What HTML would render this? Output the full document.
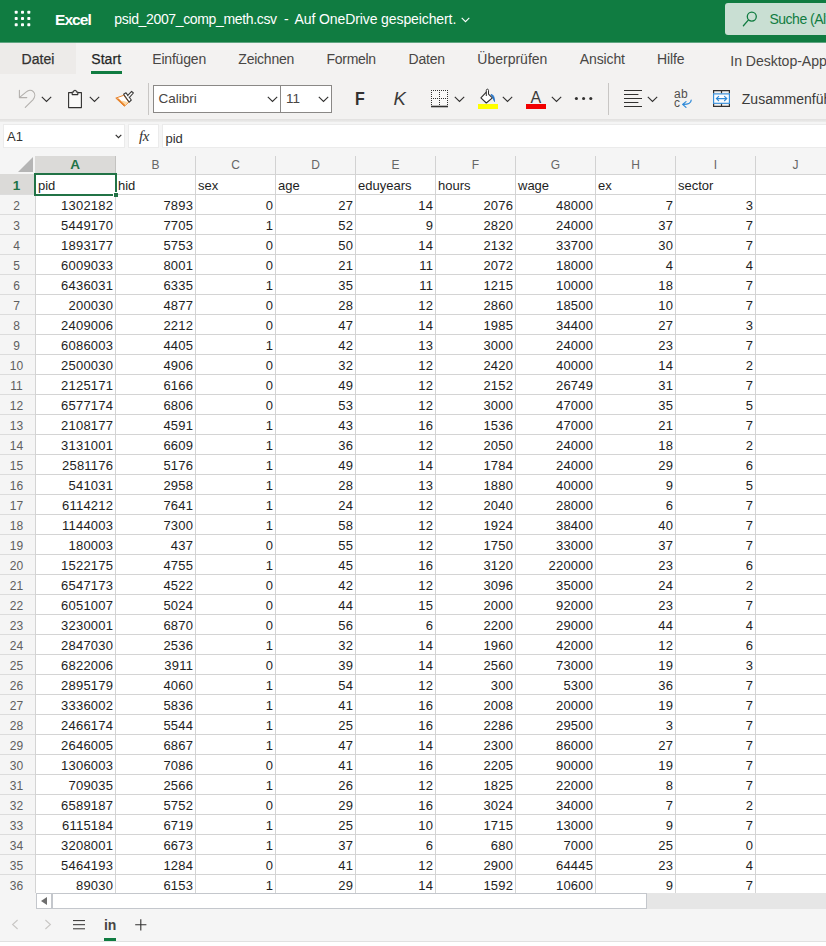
<!DOCTYPE html>
<html lang="de">
<head>
<meta charset="utf-8">
<title>psid_2007_comp_meth.csv - Excel</title>
<style>
*{box-sizing:border-box;margin:0;padding:0}
html,body{width:826px;height:946px;overflow:hidden;background:#f3f2f1;font-family:"Liberation Sans",sans-serif;}
body{position:relative}
.abs{position:absolute}
/* ---------- top green bar ---------- */
#top{position:absolute;left:0;top:0;width:826px;height:43px;background:#107c41;color:#fff;border-bottom:1px solid #5fa581;z-index:2}
#top .brand{position:absolute;left:55px;top:10px;font-size:15.5px;font-weight:bold;letter-spacing:-0.95px;line-height:20px}
#top .fname{position:absolute;left:114px;top:9.3px;font-size:14px;line-height:20px;white-space:nowrap}
#search{position:absolute;left:725px;top:3px;width:120px;height:32px;background:#c9dfd3;border-radius:3px;color:#107c41;font-size:14px;line-height:33px;padding-left:44.5px;white-space:nowrap;letter-spacing:-0.5px}
/* ---------- tabs ---------- */
#tabs{position:absolute;left:0;top:42px;width:826px;height:32px;background:#f3f2f1;color:#444;font-size:14px}
#tabs .sb{-webkit-text-stroke:0.25px #323130;color:#323130;letter-spacing:0.05px}
#tabs .file{position:absolute;left:0;top:0;width:76px;height:32px;background:#edebe9}
#tabs span{position:absolute;top:8px;line-height:18px;white-space:nowrap;color:#484644}
#tabs .ul{position:absolute;left:91px;top:29px;width:31px;height:3px;background:#107c41}
/* ---------- ribbon ---------- */
#ribbon{position:absolute;left:0;top:74px;width:826px;height:44px;background:#f3f2f1}
#ribbon .sep{position:absolute;top:7px;width:1px;height:32px;background:#c8c6c4}
#fontbox{position:absolute;left:153px;top:11px;width:128px;height:28px;background:#fff;border:1px solid #8a8886;font-size:13.5px;line-height:26px;padding-left:4.5px;color:#484644}
#sizebox{position:absolute;left:280px;top:11px;width:52px;height:28px;background:#fff;border:1px solid #8a8886;font-size:13.5px;line-height:26px;padding-left:5px;color:#484644}
#ribbon .txt{position:absolute;color:#323130;white-space:nowrap}
#ribbon .chev{}
#shadow{position:absolute;left:0;top:119px;width:826px;height:5px;background:linear-gradient(#e2e1e0 0,#e5e4e3 25%,#ececeb 55%,#f5f5f5 100%)}
/* ---------- formula bar ---------- */
#fbar{position:absolute;left:0;top:122px;width:826px;height:34px;background:#f5f5f5}
#namebox{position:absolute;left:3px;top:2px;width:122px;height:24px;background:#fff;border:1px solid #ebebeb;font-size:13px;line-height:24px;padding-left:3px;color:#323130}
#fx{position:absolute;left:128px;top:2px;width:31px;height:24px;background:#fff;border:1px solid #ebebeb;font-family:'Liberation Serif',serif;font-style:italic;font-size:15px;line-height:22px;padding-left:10px;color:#323130;letter-spacing:-0.5px}
#finput{position:absolute;left:162px;top:2px;width:670px;height:24px;background:#fff;border:1px solid #ebebeb;font-size:13px;line-height:27px;padding-left:2.5px;color:#323130}
/* ---------- grid ---------- */
#grid{position:absolute;left:0;top:156px;width:826px;height:737px;background:#fff}
#gridlines{position:absolute;left:35px;top:174px;width:791px;height:719px;
 background-image:linear-gradient(to right,#d4d4d4 1px,transparent 1px),linear-gradient(to bottom,transparent 19px,#d4d4d4 19px);
 background-size:80px 20px,20px 20px;background-position:0 0,0 1px}
#colhead{position:absolute;left:0;top:156px;width:826px;height:19px;background:#f5f5f5;border-bottom:1px solid #c6c6c6}
#tri{position:absolute;left:18px;top:157px;width:0;height:0;border-left:15px solid transparent;border-bottom:15px solid #b5b5b5}
#rowhead{position:absolute;left:0;top:175px;width:35px;height:734px;background:#f5f5f5}
.ch{position:absolute;top:156px;width:80px;height:18px;line-height:18px;text-align:center;font-size:12px;color:#666;border-right:1px solid #d2d2d2}
.ch.sel{background:#dbdad8;color:#217346;font-weight:bold;font-size:13.5px;border-right:1px solid #c3c2c0;width:81px;margin-left:-1px;height:17px;line-height:17px}
.rh{position:absolute;left:0;width:35px;height:20px;line-height:24px;text-align:center;font-size:12px;color:#5f5f5f;padding-right:2px;border-bottom:1px solid #dcdcdc;height:21px}
.rh.sel{background:#dbdad8;color:#217346;font-weight:bold;font-size:13.5px;line-height:23px}
.c{position:absolute;width:80px;height:20px;line-height:23px;font-size:13px;text-align:right;padding:0 1.9px 0 3px;color:#1e1e1e;white-space:nowrap;letter-spacing:0.2px}
.c.l{text-align:left;letter-spacing:0}
#selbox{position:absolute;left:34px;top:173px;width:83px;height:23px;border:2px solid #217346}
#handle{position:absolute;left:113px;top:192px;width:5px;height:5px;background:#217346;border-left:1px solid #fff;border-top:1px solid #fff}
/* ---------- bottom ---------- */
#hscroll{position:absolute;left:35px;top:893px;width:791px;height:16px;background:#e6e6e6}
#hscroll:before{content:'';position:absolute;left:0;top:0;width:1px;height:16px;background:#f5f5f5}
#hscroll .btn{position:absolute;left:1px;top:0;width:16px;height:16px;background:#fff;border:1px solid #c4c7cc}
#hscroll .btn:after{content:'';position:absolute;left:4px;top:3px;border-right:6px solid #6e6e6e;border-top:4px solid transparent;border-bottom:4px solid transparent}
#hscroll .thumb{position:absolute;left:17px;top:0;width:595px;height:16px;background:#fff;border:1px solid #c4c7cc}
#sheetbar{position:absolute;left:0;top:909px;width:826px;height:32px;background:#f5f5f5}
#status{position:absolute;left:0;top:941px;width:826px;height:5px;background:#fff;border-top:1px solid #e1e1e1}
</style>
</head>
<body>
<div id="top">
  <svg class="abs" style="left:14px;top:10px" width="17" height="17" viewBox="0 0 17 17" fill="#fff">
    <rect x="0.7" y="0.8" width="3" height="3" rx="0.8"/><rect x="7" y="0.8" width="3" height="3" rx="0.8"/><rect x="13.3" y="0.8" width="3" height="3" rx="0.8"/>
    <rect x="0.7" y="7" width="3" height="3" rx="0.8"/><rect x="7" y="7" width="3" height="3" rx="0.8"/><rect x="13.3" y="7" width="3" height="3" rx="0.8"/>
    <rect x="0.7" y="13.2" width="3" height="3" rx="0.8"/><rect x="7" y="13.2" width="3" height="3" rx="0.8"/><rect x="13.3" y="13.2" width="3" height="3" rx="0.8"/>
  </svg>
  <div class="brand">Excel</div>
  <div class="fname" id="fn1" style="left:114.3px;letter-spacing:-0.35px">psid_2007_comp_meth.csv</div>
  <div class="fname" id="fn2" style="left:284px">-</div>
  <div class="fname" id="fn3" style="left:294.5px;letter-spacing:-0.1px">Auf OneDrive gespeichert.</div>
  <svg class="abs" style="left:461px;top:17px" width="9" height="6" viewBox="0 0 9 6" fill="none" stroke="#fff" stroke-width="1.1"><path d="M0.7 0.8 L4.5 4.6 L8.3 0.8"/></svg>
  <div id="search">Suche (Alt + M)</div>
  <svg class="abs" style="left:742px;top:10px" width="17" height="17" viewBox="0 0 17 17" fill="none" stroke="#107c41" stroke-width="1.3" stroke-linecap="round"><circle cx="9.8" cy="6.6" r="4.5"/><path d="M6.5 9.9 L1.4 15.8"/></svg>
</div>

<div id="tabs">
  <div class="file"></div>
  <span class="sb" style="left:21.5px">Datei</span>
  <span class="sb" style="left:91.3px;color:#201f1e">Start</span>
  <div class="ul"></div>
  <span style="left:152.3px;letter-spacing:-0.2px">Einfügen</span>
  <span style="left:238.3px;letter-spacing:-0.22px">Zeichnen</span>
  <span style="left:326.6px;letter-spacing:-0.3px">Formeln</span>
  <span style="left:408.6px;letter-spacing:-0.2px">Daten</span>
  <span style="left:477.3px">Überprüfen</span>
  <span style="left:579.8px;letter-spacing:-0.12px">Ansicht</span>
  <span style="left:657px;letter-spacing:-0.1px">Hilfe</span>
  <span style="left:730.3px;top:9.6px;font-size:14.1px;letter-spacing:-0.05px">In Desktop-App öffnen</span>
</div>

<div id="ribbon">
    <!-- undo (disabled) -->
  <svg class="abs" style="left:18px;top:15px" width="18" height="20" viewBox="0 0 18 20" fill="none" stroke="#b3b0ad" stroke-width="1.1" stroke-linecap="round" stroke-linejoin="round">
    <path d="M1.4 1.2 V8.6 H8.8"/><path d="M1.6 8.4 L8.3 2.8 C10.4 1 13.4 0.8 15.3 2.6 C17.4 4.8 17.2 8.2 14.9 10.8 L7.3 18.4"/>
  </svg>
  <svg class="abs chev" style="left:41px;top:22px" width="11" height="7" viewBox="0 0 11 7" fill="none" stroke="#323130" stroke-width="1.1"><path d="M0.8 0.8 L5.5 5.5 L10.2 0.8"/></svg>
  <!-- paste -->
  <svg class="abs" style="left:67px;top:15px" width="16" height="20" viewBox="0 0 16 20" fill="none" stroke="#323130" stroke-width="1.1" stroke-linejoin="round">
    <path d="M5 3.6 H1.6 V18.6 H14.4 V3.6 H11" fill="#faf9f8"/><path d="M5.2 5.6 V3 H6.6 C6.6 0.6 9.4 0.6 9.4 3 H10.8 V5.6 Z" fill="#f3f2f1"/>
  </svg>
  <svg class="abs chev" style="left:89px;top:22px" width="11" height="7" viewBox="0 0 11 7" fill="none" stroke="#323130" stroke-width="1.1"><path d="M0.8 0.8 L5.5 5.5 L10.2 0.8"/></svg>
  <!-- format painter -->
  <svg class="abs" style="left:115px;top:16px" width="20" height="18" viewBox="0 0 20 18" fill="none" stroke-linejoin="round">
    <path d="M0.8 8.1 L8.7 5.3 L13.8 12.2 L9.3 16.2 Z" fill="#fff" stroke="#e8832a" stroke-width="1"/>
    <path d="M6.4 10.6 L13.4 12.3 L9.4 15.8 Z" fill="#fbd7a3"/>
    <path d="M0.8 8.1 L9.3 16.2 L10.4 15.2 L3.6 8.4 Z" fill="#e8832a"/>
    <path d="M8.6 4.2 L11 2.8 L16.3 10 L14.2 12.1 Z" fill="#fff" stroke="#3b3a39" stroke-width="1.1"/>
    <path d="M12.4 5.8 L16.6 1.4 L18.4 3 L14.2 7.6" fill="#fff" stroke="#3b3a39" stroke-width="1.1"/>
  </svg>
  <div class="sep" style="left:148px;top:9px"></div>
  <div id="fontbox">Calibri</div>
  <svg class="abs chev" style="left:267px;top:22px" width="11" height="7" viewBox="0 0 11 7" fill="none" stroke="#323130" stroke-width="1.1"><path d="M0.8 0.8 L5.5 5.5 L10.2 0.8"/></svg>
  <div id="sizebox">11</div>
  <svg class="abs chev" style="left:318px;top:22px" width="11" height="7" viewBox="0 0 11 7" fill="none" stroke="#323130" stroke-width="1.1"><path d="M0.8 0.8 L5.5 5.5 L10.2 0.8"/></svg>
  <div class="txt" style="left:355px;top:13px;font-size:18.5px;font-weight:bold;line-height:24px;transform:scaleX(0.86);transform-origin:0 0">F</div>
  <div class="txt" style="left:393.5px;top:13px;font-size:18.5px;font-style:italic;line-height:24px;color:#3b3a39">K</div>
  <!-- borders -->
  <svg class="abs" style="left:430px;top:15px" width="20" height="19" viewBox="0 0 20 19" fill="none" stroke="#323130" shape-rendering="crispEdges">
    <rect x="1" y="1" width="17" height="16" fill="#faf9f8" stroke="none"/>
    <path d="M1 1.5 H18 M1 9.5 H18" stroke-width="1" stroke-dasharray="1 1"/>
    <path d="M1.5 1 V17 M9.5 1 V17 M17.5 1 V17" stroke-width="1" stroke-dasharray="1 1"/>
    <path d="M1 17.5 H18" stroke-width="1.6" shape-rendering="auto"/>
  </svg>
  <svg class="abs chev" style="left:454px;top:22px" width="11" height="7" viewBox="0 0 11 7" fill="none" stroke="#323130" stroke-width="1.1"><path d="M0.8 0.8 L5.5 5.5 L10.2 0.8"/></svg>
  <!-- fill colour -->
  <svg class="abs" style="left:478px;top:14px" width="21" height="22" viewBox="0 0 21 22" fill="none">
    <path d="M8.3 4.1 L14.4 9.9 L8.3 15 L2.9 9.9 Z" fill="#fff" stroke="#323130" stroke-width="1.1" stroke-linejoin="round"/>
    <path d="M8.3 8 V2.4 C8.3 0.7 10.5 0.7 10.5 2.4 V6" fill="#fff" stroke="#323130" stroke-width="1"/>
    <path d="M13 6.4 C15.6 6.6 16.6 9.6 16.5 13.6 C15.4 11.4 15 9.4 13 6.4 Z" fill="#1f6fc5" stroke="#1f6fc5" stroke-width="0.8"/>
    <rect x="0" y="16" width="20" height="5" fill="#ffff00"/>
  </svg>
  <svg class="abs chev" style="left:502px;top:22px" width="11" height="7" viewBox="0 0 11 7" fill="none" stroke="#323130" stroke-width="1.1"><path d="M0.8 0.8 L5.5 5.5 L10.2 0.8"/></svg>
  <!-- font colour -->
  <div class="txt" style="left:530.5px;top:13.5px;font-size:16px;line-height:20px;color:#3b3a39">A</div>
  <div class="abs" style="left:526px;top:30px;width:20px;height:5px;background:#f20000"></div>
  <svg class="abs chev" style="left:550.5px;top:22px" width="11" height="7" viewBox="0 0 11 7" fill="none" stroke="#323130" stroke-width="1.1"><path d="M0.8 0.8 L5.5 5.5 L10.2 0.8"/></svg>
  <svg class="abs" style="left:574px;top:22px" width="20" height="5" viewBox="0 0 20 5" fill="#323130"><circle cx="2.4" cy="2.5" r="1.55"/><circle cx="9.6" cy="2.5" r="1.55"/><circle cx="16.8" cy="2.5" r="1.55"/></svg>
  <div class="sep" style="left:608px;top:9px"></div>
  <!-- align -->
  <svg class="abs" style="left:623px;top:15px" width="20" height="19" viewBox="0 0 20 19" fill="none" stroke="#323130" stroke-width="1.1"><path d="M1 1.5 H19 M1 5.5 H15.4 M1 9.5 H19 M1 13.5 H15.4 M1 17.5 H19"/></svg>
  <svg class="abs chev" style="left:647px;top:22px" width="11" height="7" viewBox="0 0 11 7" fill="none" stroke="#323130" stroke-width="1.1"><path d="M0.8 0.8 L5.5 5.5 L10.2 0.8"/></svg>
  <!-- wrap text -->
  <div class="txt" style="left:674px;top:14.3px;font-size:12px;line-height:12px;letter-spacing:0.3px;color:#504e4c">ab</div>
  <div class="txt" style="left:674px;top:22.8px;font-size:12px;line-height:12px;color:#504e4c">c</div>
  <svg class="abs" style="left:681px;top:24px" width="12" height="11" viewBox="0 0 12 11" fill="none" stroke="#2b88d8" stroke-width="1.2" stroke-linecap="round" stroke-linejoin="round"><path d="M10.2 2 C10.2 5.4 7 6.6 1.8 6.4 M5 3.6 L1.6 6.4 L5 9.4"/></svg>
  <!-- merge -->
  <svg class="abs" style="left:712px;top:15px" width="19" height="19" viewBox="0 0 19 19" fill="none">
    <path d="M1 1.6 H18 M1 17.4 H18 M9.5 1.6 V4.6 M9.5 14.4 V17.4 M1.6 1.2 V4.6 M17.4 1.2 V4.6 M1.6 14.4 V17.8 M17.4 14.4 V17.8" stroke="#323130" stroke-width="1.2"/>
    <rect x="1.6" y="4.9" width="15.8" height="9.4" fill="#fafcfe" stroke="#2b88d8" stroke-width="1.1"/>
    <path d="M4.6 9.6 H14.6 M7 7.2 L4.4 9.6 L7 12 M12.2 7.2 L14.8 9.6 L12.2 12" stroke="#2b88d8" stroke-width="1.1"/>
  </svg>
  <div class="txt" style="left:741.8px;top:15px;font-size:14px;line-height:20px;color:#3b3a39">Zusammenführen</div>

</div>
<div id="shadow"></div>

<div id="fbar">
  <div id="namebox">A1</div>
  <div id="fx">fx</div>
  <svg class="abs" style="left:115px;top:12px" width="7" height="5" viewBox="0 0 7 5" fill="none" stroke="#323130" stroke-width="1.2"><path d="M0.7 0.8 L3.5 3.6 L6.3 0.8"/></svg>
  <div id="finput">pid</div>
</div>

<div id="grid"></div>
<div id="colhead"></div>
<div id="tri"></div>
<div id="rowhead"></div>
<div id="gridlines"></div>
<div class="ch sel" style="left:36px">A</div>
<div class="ch" style="left:116px">B</div>
<div class="ch" style="left:196px">C</div>
<div class="ch" style="left:276px">D</div>
<div class="ch" style="left:356px">E</div>
<div class="ch" style="left:436px">F</div>
<div class="ch" style="left:516px">G</div>
<div class="ch" style="left:596px">H</div>
<div class="ch" style="left:676px">I</div>
<div class="ch" style="left:756px">J</div>
<div class="rh sel" style="top:174px">1</div>
<div class="rh" style="top:194px">2</div>
<div class="rh" style="top:214px">3</div>
<div class="rh" style="top:234px">4</div>
<div class="rh" style="top:254px">5</div>
<div class="rh" style="top:274px">6</div>
<div class="rh" style="top:294px">7</div>
<div class="rh" style="top:314px">8</div>
<div class="rh" style="top:334px">9</div>
<div class="rh" style="top:354px">10</div>
<div class="rh" style="top:374px">11</div>
<div class="rh" style="top:394px">12</div>
<div class="rh" style="top:414px">13</div>
<div class="rh" style="top:434px">14</div>
<div class="rh" style="top:454px">15</div>
<div class="rh" style="top:474px">16</div>
<div class="rh" style="top:494px">17</div>
<div class="rh" style="top:514px">18</div>
<div class="rh" style="top:534px">19</div>
<div class="rh" style="top:554px">20</div>
<div class="rh" style="top:574px">21</div>
<div class="rh" style="top:594px">22</div>
<div class="rh" style="top:614px">23</div>
<div class="rh" style="top:634px">24</div>
<div class="rh" style="top:654px">25</div>
<div class="rh" style="top:674px">26</div>
<div class="rh" style="top:694px">27</div>
<div class="rh" style="top:714px">28</div>
<div class="rh" style="top:734px">29</div>
<div class="rh" style="top:754px">30</div>
<div class="rh" style="top:774px">31</div>
<div class="rh" style="top:794px">32</div>
<div class="rh" style="top:814px">33</div>
<div class="rh" style="top:834px">34</div>
<div class="rh" style="top:854px">35</div>
<div class="rh" style="top:874px;border-bottom-color:transparent">36</div>
<div class="c l" style="left:35px;top:174px">pid</div>
<div class="c l" style="left:115px;top:174px">hid</div>
<div class="c l" style="left:195px;top:174px">sex</div>
<div class="c l" style="left:275px;top:174px">age</div>
<div class="c l" style="left:355px;top:174px">eduyears</div>
<div class="c l" style="left:435px;top:174px">hours</div>
<div class="c l" style="left:515px;top:174px">wage</div>
<div class="c l" style="left:595px;top:174px">ex</div>
<div class="c l" style="left:675px;top:174px">sector</div>
<div class="c" style="left:35px;top:194px">1302182</div>
<div class="c" style="left:115px;top:194px">7893</div>
<div class="c" style="left:195px;top:194px">0</div>
<div class="c" style="left:275px;top:194px">27</div>
<div class="c" style="left:355px;top:194px">14</div>
<div class="c" style="left:435px;top:194px">2076</div>
<div class="c" style="left:515px;top:194px">48000</div>
<div class="c" style="left:595px;top:194px">7</div>
<div class="c" style="left:675px;top:194px">3</div>
<div class="c" style="left:35px;top:214px">5449170</div>
<div class="c" style="left:115px;top:214px">7705</div>
<div class="c" style="left:195px;top:214px">1</div>
<div class="c" style="left:275px;top:214px">52</div>
<div class="c" style="left:355px;top:214px">9</div>
<div class="c" style="left:435px;top:214px">2820</div>
<div class="c" style="left:515px;top:214px">24000</div>
<div class="c" style="left:595px;top:214px">37</div>
<div class="c" style="left:675px;top:214px">7</div>
<div class="c" style="left:35px;top:234px">1893177</div>
<div class="c" style="left:115px;top:234px">5753</div>
<div class="c" style="left:195px;top:234px">0</div>
<div class="c" style="left:275px;top:234px">50</div>
<div class="c" style="left:355px;top:234px">14</div>
<div class="c" style="left:435px;top:234px">2132</div>
<div class="c" style="left:515px;top:234px">33700</div>
<div class="c" style="left:595px;top:234px">30</div>
<div class="c" style="left:675px;top:234px">7</div>
<div class="c" style="left:35px;top:254px">6009033</div>
<div class="c" style="left:115px;top:254px">8001</div>
<div class="c" style="left:195px;top:254px">0</div>
<div class="c" style="left:275px;top:254px">21</div>
<div class="c" style="left:355px;top:254px">11</div>
<div class="c" style="left:435px;top:254px">2072</div>
<div class="c" style="left:515px;top:254px">18000</div>
<div class="c" style="left:595px;top:254px">4</div>
<div class="c" style="left:675px;top:254px">4</div>
<div class="c" style="left:35px;top:274px">6436031</div>
<div class="c" style="left:115px;top:274px">6335</div>
<div class="c" style="left:195px;top:274px">1</div>
<div class="c" style="left:275px;top:274px">35</div>
<div class="c" style="left:355px;top:274px">11</div>
<div class="c" style="left:435px;top:274px">1215</div>
<div class="c" style="left:515px;top:274px">10000</div>
<div class="c" style="left:595px;top:274px">18</div>
<div class="c" style="left:675px;top:274px">7</div>
<div class="c" style="left:35px;top:294px">200030</div>
<div class="c" style="left:115px;top:294px">4877</div>
<div class="c" style="left:195px;top:294px">0</div>
<div class="c" style="left:275px;top:294px">28</div>
<div class="c" style="left:355px;top:294px">12</div>
<div class="c" style="left:435px;top:294px">2860</div>
<div class="c" style="left:515px;top:294px">18500</div>
<div class="c" style="left:595px;top:294px">10</div>
<div class="c" style="left:675px;top:294px">7</div>
<div class="c" style="left:35px;top:314px">2409006</div>
<div class="c" style="left:115px;top:314px">2212</div>
<div class="c" style="left:195px;top:314px">0</div>
<div class="c" style="left:275px;top:314px">47</div>
<div class="c" style="left:355px;top:314px">14</div>
<div class="c" style="left:435px;top:314px">1985</div>
<div class="c" style="left:515px;top:314px">34400</div>
<div class="c" style="left:595px;top:314px">27</div>
<div class="c" style="left:675px;top:314px">3</div>
<div class="c" style="left:35px;top:334px">6086003</div>
<div class="c" style="left:115px;top:334px">4405</div>
<div class="c" style="left:195px;top:334px">1</div>
<div class="c" style="left:275px;top:334px">42</div>
<div class="c" style="left:355px;top:334px">13</div>
<div class="c" style="left:435px;top:334px">3000</div>
<div class="c" style="left:515px;top:334px">24000</div>
<div class="c" style="left:595px;top:334px">23</div>
<div class="c" style="left:675px;top:334px">7</div>
<div class="c" style="left:35px;top:354px">2500030</div>
<div class="c" style="left:115px;top:354px">4906</div>
<div class="c" style="left:195px;top:354px">0</div>
<div class="c" style="left:275px;top:354px">32</div>
<div class="c" style="left:355px;top:354px">12</div>
<div class="c" style="left:435px;top:354px">2420</div>
<div class="c" style="left:515px;top:354px">40000</div>
<div class="c" style="left:595px;top:354px">14</div>
<div class="c" style="left:675px;top:354px">2</div>
<div class="c" style="left:35px;top:374px">2125171</div>
<div class="c" style="left:115px;top:374px">6166</div>
<div class="c" style="left:195px;top:374px">0</div>
<div class="c" style="left:275px;top:374px">49</div>
<div class="c" style="left:355px;top:374px">12</div>
<div class="c" style="left:435px;top:374px">2152</div>
<div class="c" style="left:515px;top:374px">26749</div>
<div class="c" style="left:595px;top:374px">31</div>
<div class="c" style="left:675px;top:374px">7</div>
<div class="c" style="left:35px;top:394px">6577174</div>
<div class="c" style="left:115px;top:394px">6806</div>
<div class="c" style="left:195px;top:394px">0</div>
<div class="c" style="left:275px;top:394px">53</div>
<div class="c" style="left:355px;top:394px">12</div>
<div class="c" style="left:435px;top:394px">3000</div>
<div class="c" style="left:515px;top:394px">47000</div>
<div class="c" style="left:595px;top:394px">35</div>
<div class="c" style="left:675px;top:394px">5</div>
<div class="c" style="left:35px;top:414px">2108177</div>
<div class="c" style="left:115px;top:414px">4591</div>
<div class="c" style="left:195px;top:414px">1</div>
<div class="c" style="left:275px;top:414px">43</div>
<div class="c" style="left:355px;top:414px">16</div>
<div class="c" style="left:435px;top:414px">1536</div>
<div class="c" style="left:515px;top:414px">47000</div>
<div class="c" style="left:595px;top:414px">21</div>
<div class="c" style="left:675px;top:414px">7</div>
<div class="c" style="left:35px;top:434px">3131001</div>
<div class="c" style="left:115px;top:434px">6609</div>
<div class="c" style="left:195px;top:434px">1</div>
<div class="c" style="left:275px;top:434px">36</div>
<div class="c" style="left:355px;top:434px">12</div>
<div class="c" style="left:435px;top:434px">2050</div>
<div class="c" style="left:515px;top:434px">24000</div>
<div class="c" style="left:595px;top:434px">18</div>
<div class="c" style="left:675px;top:434px">2</div>
<div class="c" style="left:35px;top:454px">2581176</div>
<div class="c" style="left:115px;top:454px">5176</div>
<div class="c" style="left:195px;top:454px">1</div>
<div class="c" style="left:275px;top:454px">49</div>
<div class="c" style="left:355px;top:454px">14</div>
<div class="c" style="left:435px;top:454px">1784</div>
<div class="c" style="left:515px;top:454px">24000</div>
<div class="c" style="left:595px;top:454px">29</div>
<div class="c" style="left:675px;top:454px">6</div>
<div class="c" style="left:35px;top:474px">541031</div>
<div class="c" style="left:115px;top:474px">2958</div>
<div class="c" style="left:195px;top:474px">1</div>
<div class="c" style="left:275px;top:474px">28</div>
<div class="c" style="left:355px;top:474px">13</div>
<div class="c" style="left:435px;top:474px">1880</div>
<div class="c" style="left:515px;top:474px">40000</div>
<div class="c" style="left:595px;top:474px">9</div>
<div class="c" style="left:675px;top:474px">5</div>
<div class="c" style="left:35px;top:494px">6114212</div>
<div class="c" style="left:115px;top:494px">7641</div>
<div class="c" style="left:195px;top:494px">1</div>
<div class="c" style="left:275px;top:494px">24</div>
<div class="c" style="left:355px;top:494px">12</div>
<div class="c" style="left:435px;top:494px">2040</div>
<div class="c" style="left:515px;top:494px">28000</div>
<div class="c" style="left:595px;top:494px">6</div>
<div class="c" style="left:675px;top:494px">7</div>
<div class="c" style="left:35px;top:514px">1144003</div>
<div class="c" style="left:115px;top:514px">7300</div>
<div class="c" style="left:195px;top:514px">1</div>
<div class="c" style="left:275px;top:514px">58</div>
<div class="c" style="left:355px;top:514px">12</div>
<div class="c" style="left:435px;top:514px">1924</div>
<div class="c" style="left:515px;top:514px">38400</div>
<div class="c" style="left:595px;top:514px">40</div>
<div class="c" style="left:675px;top:514px">7</div>
<div class="c" style="left:35px;top:534px">180003</div>
<div class="c" style="left:115px;top:534px">437</div>
<div class="c" style="left:195px;top:534px">0</div>
<div class="c" style="left:275px;top:534px">55</div>
<div class="c" style="left:355px;top:534px">12</div>
<div class="c" style="left:435px;top:534px">1750</div>
<div class="c" style="left:515px;top:534px">33000</div>
<div class="c" style="left:595px;top:534px">37</div>
<div class="c" style="left:675px;top:534px">7</div>
<div class="c" style="left:35px;top:554px">1522175</div>
<div class="c" style="left:115px;top:554px">4755</div>
<div class="c" style="left:195px;top:554px">1</div>
<div class="c" style="left:275px;top:554px">45</div>
<div class="c" style="left:355px;top:554px">16</div>
<div class="c" style="left:435px;top:554px">3120</div>
<div class="c" style="left:515px;top:554px">220000</div>
<div class="c" style="left:595px;top:554px">23</div>
<div class="c" style="left:675px;top:554px">6</div>
<div class="c" style="left:35px;top:574px">6547173</div>
<div class="c" style="left:115px;top:574px">4522</div>
<div class="c" style="left:195px;top:574px">0</div>
<div class="c" style="left:275px;top:574px">42</div>
<div class="c" style="left:355px;top:574px">12</div>
<div class="c" style="left:435px;top:574px">3096</div>
<div class="c" style="left:515px;top:574px">35000</div>
<div class="c" style="left:595px;top:574px">24</div>
<div class="c" style="left:675px;top:574px">2</div>
<div class="c" style="left:35px;top:594px">6051007</div>
<div class="c" style="left:115px;top:594px">5024</div>
<div class="c" style="left:195px;top:594px">0</div>
<div class="c" style="left:275px;top:594px">44</div>
<div class="c" style="left:355px;top:594px">15</div>
<div class="c" style="left:435px;top:594px">2000</div>
<div class="c" style="left:515px;top:594px">92000</div>
<div class="c" style="left:595px;top:594px">23</div>
<div class="c" style="left:675px;top:594px">7</div>
<div class="c" style="left:35px;top:614px">3230001</div>
<div class="c" style="left:115px;top:614px">6870</div>
<div class="c" style="left:195px;top:614px">0</div>
<div class="c" style="left:275px;top:614px">56</div>
<div class="c" style="left:355px;top:614px">6</div>
<div class="c" style="left:435px;top:614px">2200</div>
<div class="c" style="left:515px;top:614px">29000</div>
<div class="c" style="left:595px;top:614px">44</div>
<div class="c" style="left:675px;top:614px">4</div>
<div class="c" style="left:35px;top:634px">2847030</div>
<div class="c" style="left:115px;top:634px">2536</div>
<div class="c" style="left:195px;top:634px">1</div>
<div class="c" style="left:275px;top:634px">32</div>
<div class="c" style="left:355px;top:634px">14</div>
<div class="c" style="left:435px;top:634px">1960</div>
<div class="c" style="left:515px;top:634px">42000</div>
<div class="c" style="left:595px;top:634px">12</div>
<div class="c" style="left:675px;top:634px">6</div>
<div class="c" style="left:35px;top:654px">6822006</div>
<div class="c" style="left:115px;top:654px">3911</div>
<div class="c" style="left:195px;top:654px">0</div>
<div class="c" style="left:275px;top:654px">39</div>
<div class="c" style="left:355px;top:654px">14</div>
<div class="c" style="left:435px;top:654px">2560</div>
<div class="c" style="left:515px;top:654px">73000</div>
<div class="c" style="left:595px;top:654px">19</div>
<div class="c" style="left:675px;top:654px">3</div>
<div class="c" style="left:35px;top:674px">2895179</div>
<div class="c" style="left:115px;top:674px">4060</div>
<div class="c" style="left:195px;top:674px">1</div>
<div class="c" style="left:275px;top:674px">54</div>
<div class="c" style="left:355px;top:674px">12</div>
<div class="c" style="left:435px;top:674px">300</div>
<div class="c" style="left:515px;top:674px">5300</div>
<div class="c" style="left:595px;top:674px">36</div>
<div class="c" style="left:675px;top:674px">7</div>
<div class="c" style="left:35px;top:694px">3336002</div>
<div class="c" style="left:115px;top:694px">5836</div>
<div class="c" style="left:195px;top:694px">1</div>
<div class="c" style="left:275px;top:694px">41</div>
<div class="c" style="left:355px;top:694px">16</div>
<div class="c" style="left:435px;top:694px">2008</div>
<div class="c" style="left:515px;top:694px">20000</div>
<div class="c" style="left:595px;top:694px">19</div>
<div class="c" style="left:675px;top:694px">7</div>
<div class="c" style="left:35px;top:714px">2466174</div>
<div class="c" style="left:115px;top:714px">5544</div>
<div class="c" style="left:195px;top:714px">1</div>
<div class="c" style="left:275px;top:714px">25</div>
<div class="c" style="left:355px;top:714px">16</div>
<div class="c" style="left:435px;top:714px">2286</div>
<div class="c" style="left:515px;top:714px">29500</div>
<div class="c" style="left:595px;top:714px">3</div>
<div class="c" style="left:675px;top:714px">7</div>
<div class="c" style="left:35px;top:734px">2646005</div>
<div class="c" style="left:115px;top:734px">6867</div>
<div class="c" style="left:195px;top:734px">1</div>
<div class="c" style="left:275px;top:734px">47</div>
<div class="c" style="left:355px;top:734px">14</div>
<div class="c" style="left:435px;top:734px">2300</div>
<div class="c" style="left:515px;top:734px">86000</div>
<div class="c" style="left:595px;top:734px">27</div>
<div class="c" style="left:675px;top:734px">7</div>
<div class="c" style="left:35px;top:754px">1306003</div>
<div class="c" style="left:115px;top:754px">7086</div>
<div class="c" style="left:195px;top:754px">0</div>
<div class="c" style="left:275px;top:754px">41</div>
<div class="c" style="left:355px;top:754px">16</div>
<div class="c" style="left:435px;top:754px">2205</div>
<div class="c" style="left:515px;top:754px">90000</div>
<div class="c" style="left:595px;top:754px">19</div>
<div class="c" style="left:675px;top:754px">7</div>
<div class="c" style="left:35px;top:774px">709035</div>
<div class="c" style="left:115px;top:774px">2566</div>
<div class="c" style="left:195px;top:774px">1</div>
<div class="c" style="left:275px;top:774px">26</div>
<div class="c" style="left:355px;top:774px">12</div>
<div class="c" style="left:435px;top:774px">1825</div>
<div class="c" style="left:515px;top:774px">22000</div>
<div class="c" style="left:595px;top:774px">8</div>
<div class="c" style="left:675px;top:774px">7</div>
<div class="c" style="left:35px;top:794px">6589187</div>
<div class="c" style="left:115px;top:794px">5752</div>
<div class="c" style="left:195px;top:794px">0</div>
<div class="c" style="left:275px;top:794px">29</div>
<div class="c" style="left:355px;top:794px">16</div>
<div class="c" style="left:435px;top:794px">3024</div>
<div class="c" style="left:515px;top:794px">34000</div>
<div class="c" style="left:595px;top:794px">7</div>
<div class="c" style="left:675px;top:794px">2</div>
<div class="c" style="left:35px;top:814px">6115184</div>
<div class="c" style="left:115px;top:814px">6719</div>
<div class="c" style="left:195px;top:814px">1</div>
<div class="c" style="left:275px;top:814px">25</div>
<div class="c" style="left:355px;top:814px">10</div>
<div class="c" style="left:435px;top:814px">1715</div>
<div class="c" style="left:515px;top:814px">13000</div>
<div class="c" style="left:595px;top:814px">9</div>
<div class="c" style="left:675px;top:814px">7</div>
<div class="c" style="left:35px;top:834px">3208001</div>
<div class="c" style="left:115px;top:834px">6673</div>
<div class="c" style="left:195px;top:834px">1</div>
<div class="c" style="left:275px;top:834px">37</div>
<div class="c" style="left:355px;top:834px">6</div>
<div class="c" style="left:435px;top:834px">680</div>
<div class="c" style="left:515px;top:834px">7000</div>
<div class="c" style="left:595px;top:834px">25</div>
<div class="c" style="left:675px;top:834px">0</div>
<div class="c" style="left:35px;top:854px">5464193</div>
<div class="c" style="left:115px;top:854px">1284</div>
<div class="c" style="left:195px;top:854px">0</div>
<div class="c" style="left:275px;top:854px">41</div>
<div class="c" style="left:355px;top:854px">12</div>
<div class="c" style="left:435px;top:854px">2900</div>
<div class="c" style="left:515px;top:854px">64445</div>
<div class="c" style="left:595px;top:854px">23</div>
<div class="c" style="left:675px;top:854px">4</div>
<div class="c" style="left:35px;top:874px">89030</div>
<div class="c" style="left:115px;top:874px">6153</div>
<div class="c" style="left:195px;top:874px">1</div>
<div class="c" style="left:275px;top:874px">29</div>
<div class="c" style="left:355px;top:874px">14</div>
<div class="c" style="left:435px;top:874px">1592</div>
<div class="c" style="left:515px;top:874px">10600</div>
<div class="c" style="left:595px;top:874px">9</div>
<div class="c" style="left:675px;top:874px">7</div>
<div id="selbox"></div>
<div id="handle"></div>

<div id="hscroll"><div class="btn"></div><div class="thumb"></div></div>
<div id="sheetbar">
    <svg class="abs" style="left:10.5px;top:10px" width="8" height="11" viewBox="0 0 8 11" fill="none" stroke="#c8c6c4" stroke-width="1.1"><path d="M6.6 1 L1.6 5.5 L6.6 10"/></svg>
  <svg class="abs" style="left:43.5px;top:10px" width="8" height="11" viewBox="0 0 8 11" fill="none" stroke="#c8c6c4" stroke-width="1.1"><path d="M1.4 1 L6.4 5.5 L1.4 10"/></svg>
  <svg class="abs" style="left:73px;top:11px" width="12" height="10" viewBox="0 0 12 10" fill="none" stroke="#323130" stroke-width="1"><path d="M0 0.6 H12 M0 4.7 H12 M0 8.8 H12"/></svg>
  <div class="abs" style="left:104px;top:5.5px;font-size:14px;line-height:20px;color:#484644;font-weight:bold;letter-spacing:-0.2px">in</div>
  <div class="abs" style="left:104px;top:29px;width:12px;height:3px;background:#107c41"></div>
  <svg class="abs" style="left:135px;top:10px" width="12" height="12" viewBox="0 0 12 12" fill="none" stroke="#323130" stroke-width="1.1"><path d="M5.8 0.2 V11.4 M0.2 5.8 H11.4"/></svg>

</div>
<div id="status"></div>
</body>
</html>
